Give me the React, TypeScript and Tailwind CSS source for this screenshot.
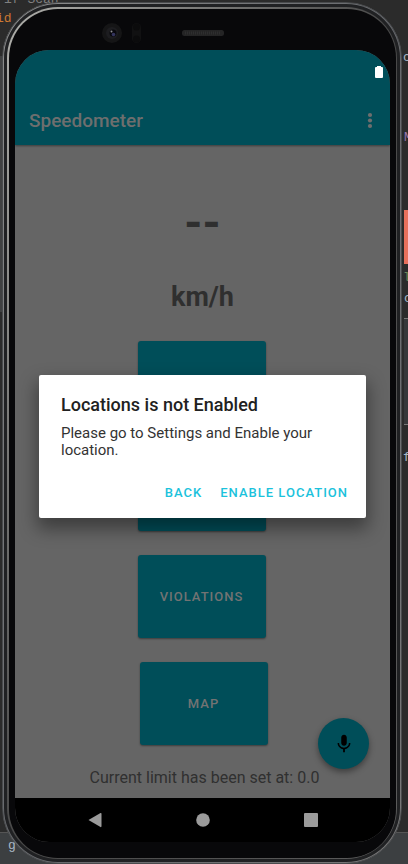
import React from "react";

const tile =
  "flex h-[83px] w-32 items-center justify-center rounded-[3px] bg-[#004e59] text-[13px] font-medium tracking-[1px] text-[#737373] shadow-[0_1px_2px_rgba(0,0,0,0.4)]";

function EditorBackdrop() {
  return (
    <div aria-hidden="true" className="absolute inset-0 overflow-hidden font-['Liberation_Mono',monospace] text-[13px] leading-4 text-[#a9b7c6]">
      <div className="absolute inset-x-0 bottom-0 h-8 border-t border-[#555] bg-[#3c3f41]" />
      <div className="absolute left-0 top-14 h-64 w-1 bg-[#404142]" />
      <span className="absolute -top-2 left-1 text-[#808080]">if Scan</span>
      <span className="absolute -left-1 top-[11px] text-[#cc7832]">id</span>
      <span className="absolute bottom-2.5 left-2">g</span>
      <span className="absolute left-[403px] top-[50px]">c</span>
      <span className="absolute left-[404px] top-[130px] text-[#9876aa]">M</span>
      <div className="absolute left-[404px] top-[210px] h-[54px] w-1 bg-[#e8705c]" />
      <span className="absolute left-[403px] top-[270px] text-[#6a8759]">l</span>
      <span className="absolute left-[404px] top-[291px]">c</span>
      <div className="absolute left-[404px] top-[318px] h-[107px] w-1 border-y border-[#777] bg-[#36383a]" />
      <span className="absolute left-[403px] top-[450px]">f</span>
    </div>
  );
}

function Sensors() {
  return (
    <div className="relative h-[41px]">
      <svg aria-hidden="true" className="absolute left-[86px] top-3" width="140" height="24" viewBox="0 0 140 24">
        <circle cx="11" cy="12" r="10" fill="#151516" />
        <circle cx="11" cy="12" r="6" fill="#1d1d20" />
        <circle cx="12" cy="12" r="3.5" fill="#08080d" />
        <circle cx="12.5" cy="13.5" r="1.8" fill="#34345d" />
        <circle cx="10.5" cy="10.5" r="1" fill="#8d8d91" />
        <rect x="31" y="2" width="9" height="20" rx="4.5" fill="#111112" />
        <circle cx="35.5" cy="6" r="3.5" fill="#0b0b0c" />
        <circle cx="35.5" cy="18" r="3.5" fill="#0b0b0c" />
        <rect x="81" y="9" width="42" height="6" rx="2.5" fill="#242425" />
        <path d="M84 12h36" stroke="#2e2e2f" strokeWidth="3" strokeDasharray="1 1" />
      </svg>
    </div>
  );
}

function AppBar() {
  return (
    <header className="bg-[#004e59] shadow-[0_1px_2px_rgba(0,0,0,0.4)]">
      <div className="flex h-[45px] justify-end pr-1.5 pt-4">
        <svg aria-hidden="true" width="10" height="12" viewBox="0 0 10 12">
          <path d="M1 2Q1 1 2 1H3V0H7V1H8Q9 1 9 2V11Q9 12 8 12H2Q1 12 1 11Z" fill="#fff" />
        </svg>
      </div>
      <div className="flex h-[50px] items-center justify-between pl-3.5 pr-3 pt-0.5">
        <h1 className="text-[19px] font-medium text-[#6e6e6e]">Speedometer</h1>
        <button type="button" aria-label="More options" className="flex h-8 w-4 items-center justify-center">
          <svg width="6" height="18" viewBox="0 0 6 18" fill="#6e6e6e">
            <circle cx="3" cy="3" r="2.1" />
            <circle cx="3" cy="8.5" r="2.1" />
            <circle cx="3" cy="14" r="2.1" />
          </svg>
        </button>
      </div>
    </header>
  );
}

function LocationDialog() {
  return (
    <div
      role="dialog"
      aria-labelledby="dialog-title"
      className="absolute inset-x-6 top-[325px] rounded-xs bg-white px-[22px] pb-[7px] pt-[18px] text-[#212121] shadow-[0_9px_18px_2px_rgba(0,0,0,0.4)]"
    >
      <h2 id="dialog-title" className="text-[18px] font-medium leading-6">Locations is not Enabled</h2>
      <p className="mt-2 text-[15px] leading-[17px] text-[#333]">Please go to Settings and Enable your location.</p>
      <div className="-mr-4 mt-4 flex justify-end text-[13px] font-medium leading-9 tracking-[1px] text-[#1bc2dc]">
        <button type="button" className="px-2">BACK</button>
        <button type="button" className="pl-2.5 pr-3">ENABLE LOCATION</button>
      </div>
    </div>
  );
}

function NavBar() {
  return (
    <nav className="flex h-11 items-center justify-center gap-[94px] bg-black">
      <button type="button" aria-label="Back">
        <svg width="14" height="16" viewBox="0 0 14 16"><path d="M0.5 8L12.5 1Q13.5 .5 13.5 2V14Q13.5 15.5 12.5 15Z" fill="#9b9b9b" /></svg>
      </button>
      <button type="button" aria-label="Home">
        <svg width="14" height="14" viewBox="0 0 14 14"><circle cx="7" cy="7" r="6.8" fill="#9b9b9b" /></svg>
      </button>
      <button type="button" aria-label="Recent apps">
        <svg width="14" height="14" viewBox="0 0 14 14"><rect width="14" height="14" rx="1" fill="#9b9b9b" /></svg>
      </button>
    </nav>
  );
}

export default function App() {
  return (
    <div className="relative min-h-screen bg-[#2b2b2b] pl-0.5 pr-1.5 pt-0.5 font-[Roboto,sans-serif]">
      <EditorBackdrop />
      <div className="relative rounded-[56px] border border-[#494b4d] bg-linear-to-br from-[#8c8c8c] via-[#66686c] to-[#777] p-px">
        <div className="rounded-[54px] bg-[#202123] p-[3px]">
          <div className="rounded-[51px] bg-linear-to-br from-[#b0b0ac] via-[#484848] to-[#5c5c5c] pb-px pl-0.5 pr-px pt-0.5">
            <div className="rounded-[49px] bg-[#08080a] pb-4 pl-1.5 pr-1.5">
              <Sensors />
              <div className="relative overflow-hidden rounded-[34px] bg-[#656565]">
                <AppBar />
                <main className="flex flex-col items-center">
                  <p className="mt-[51px] text-[46px] font-bold leading-[54px] text-[#2f2f2f]">--</p>
                  <p className="mt-[31px] text-[27px] font-bold leading-8 text-[#2f2f2f]">km/h</p>
                  <div className="mt-7 flex flex-col gap-6">
                    <button type="button" className={tile} />
                    <button type="button" className={tile} />
                    <button type="button" className={tile}>VIOLATIONS</button>
                    <button type="button" className={tile + " ml-0.5"}>MAP</button>
                  </div>
                  <p className="mb-2 mt-[21px] pl-1 text-[16px] leading-6 text-[#303030]">Current limit has been set at: 0.0</p>
                </main>
                <NavBar />
                <button
                  type="button"
                  aria-label="Speak"
                  className="absolute bottom-[73px] right-[21px] flex size-[51px] items-center justify-center rounded-full bg-[#004e59] shadow-[0_3px_6px_rgba(0,0,0,0.4)]"
                >
                  <svg width="22" height="22" viewBox="0 0 24 24">
                    <path d="M12 14c1.660 0 3-1.340 3-3V5c0-1.660-1.340-3-3-3S9 3.340 9 5v6c0 1.660 1.340 3 3 3zM17.300 11c0 3-2.540 5.100-5.300 5.100S6.700 14 6.700 11H5c0 3.410 2.720 6.230 6 6.720V21h2v-3.280c3.280-.48 6-3.300 6-6.720z" />
                  </svg>
                </button>
                <LocationDialog />
              </div>
            </div>
          </div>
        </div>
      </div>
    </div>
  );
}
